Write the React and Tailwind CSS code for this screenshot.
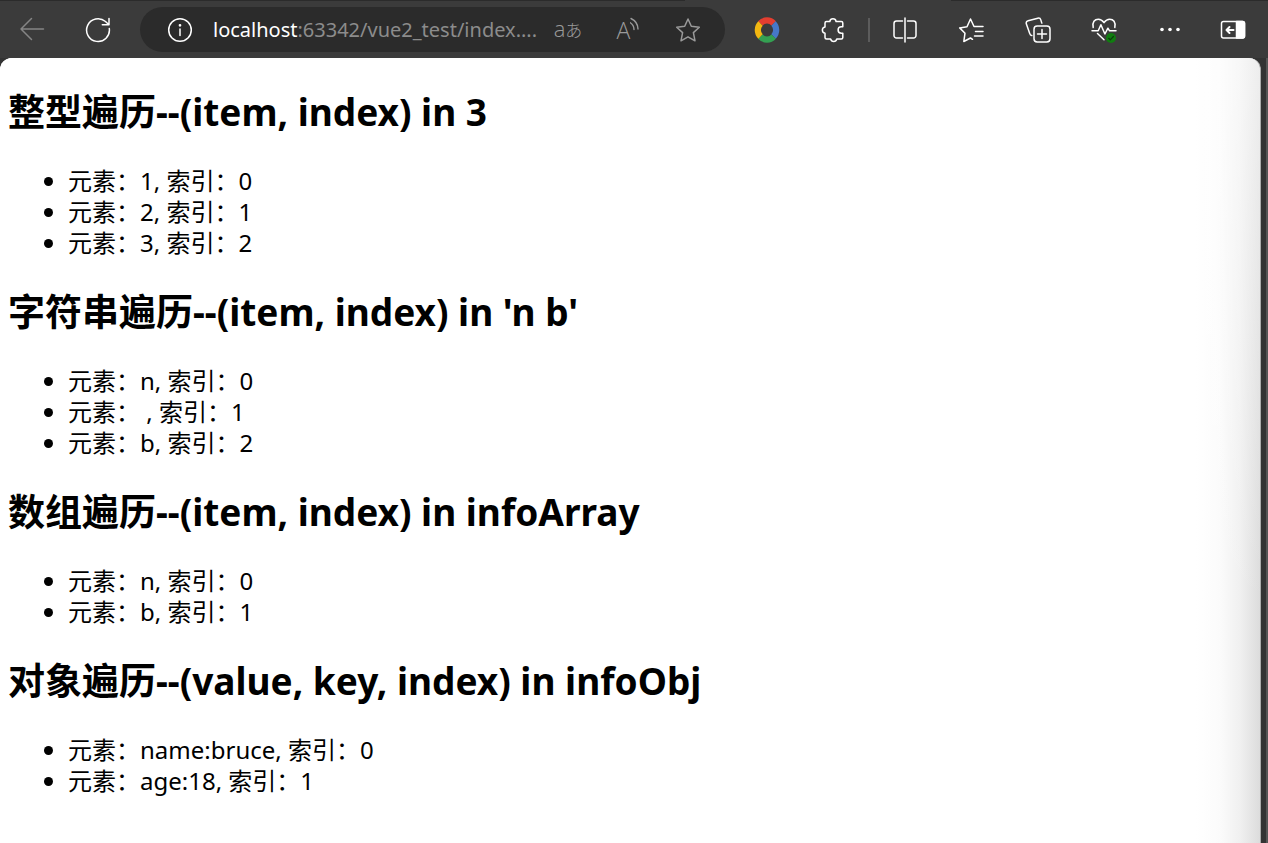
const SECTIONS = [
  {
    title: '整型遍历--(item, index) in 3',
    items: ['1', '2', '3'],
  },
  {
    title: "字符串遍历--(item, index) in 'n b'",
    items: ['n', ' ', 'b'],
  },
  {
    title: '数组遍历--(item, index) in infoArray',
    items: ['n', 'b'],
  },
  {
    title: '对象遍历--(value, key, index) in infoObj',
    items: ['name:bruce', 'age:18'],
  },
];

function Icon({ children, className = 'size-[26px]' }) {
  return (
    <svg
      viewBox="0 0 26 26"
      fill="none"
      stroke="currentColor"
      strokeWidth="1.5"
      strokeLinecap="round"
      strokeLinejoin="round"
      className={className}
      aria-hidden="true"
    >
      {children}
    </svg>
  );
}

function ToolButton({ label, className = 'w-[66px] text-white', children }) {
  return (
    <button
      type="button"
      aria-label={label}
      className={`flex h-full shrink-0 items-center justify-center ${className}`}
    >
      {children}
    </button>
  );
}

function AddressBar() {
  return (
    <div className="flex h-[45px] min-w-0 flex-1 items-center rounded-full bg-[#2b2b2b] pl-[6px] pr-[7px] text-[#9a9a9a]">
      <ToolButton label="Site information" className="w-[67px] text-white">
        <Icon>
          <circle cx="13" cy="13" r="11.3" />
          <path d="M13 12v6.5" />
          <circle cx="13" cy="8.3" r="0.6" fill="currentColor" />
        </Icon>
      </ToolButton>
      <label className="flex min-w-0 flex-1 items-center text-[20px] leading-7">
        <span className="text-white">localhost</span>
        <input
          type="text"
          aria-label="Address"
          defaultValue=":63342/vue2_test/index...."
          className="w-full min-w-0 bg-transparent text-[#8c8c8c] outline-none"
        />
      </label>
      <ToolButton label="Translate" className="w-[60px]">
        <span className="flex items-baseline leading-6">
          <span className="font-['Open_Sans'] text-[22px] font-light">a</span>
          <span className="text-[17px] font-light">あ</span>
        </span>
      </ToolButton>
      <ToolButton label="Read aloud" className="w-[60px]">
        <span className="font-['Open_Sans'] text-[23px] font-light leading-6">A</span>
        <svg
          viewBox="0 0 9 26"
          fill="none"
          stroke="currentColor"
          strokeWidth="1.4"
          strokeLinecap="round"
          className="h-[26px] w-[9px]"
          aria-hidden="true"
        >
          <path d="M0 5.500C2.500 7 4 9 4 12.500M1 1.500C5 3.500 8 7.500 8 12" />
        </svg>
      </ToolButton>
      <ToolButton label="Add to favorites" className="w-[60px]">
        <Icon>
          <path d="M13 2l3.300 7.300 8 .9-5.900 5.400 1.600 8.200-7-4-7 4 1.600-8.200L1.700 10.200l8-.9z" />
        </Icon>
      </ToolButton>
    </div>
  );
}

function Toolbar() {
  return (
    <header className="bg-[#3b3b3b]">
      <div className="flex h-px">
        <div className="w-[54%] bg-[#2b2b2b]" />
        <div className="w-[21%]" />
        <div className="flex-1 bg-[#2b2b2b]" />
      </div>
      <div className="flex h-[57px] items-center">
        <ToolButton label="Back" className="w-[64px] text-[#858585]">
          <Icon>
            <path d="M24.500 12H2M12.500 1.500L2 12l10.500 10.500" />
          </Icon>
        </ToolButton>
        <ToolButton label="Refresh" className="mr-[9px] w-[67px] text-white">
          <Icon>
            <path d="M24.300 11.500A11.400 11.400 0 1 1 20.500 4.500L23.700 7.500M24 1.500v6.300h-6.700" />
          </Icon>
        </ToolButton>
        <AddressBar />
        <ToolButton label="Google extension" className="ml-[9px] w-[66px]">
          <svg viewBox="0 0 26 26" fill="none" strokeWidth="6.200" className="size-[26px]" aria-hidden="true">
            <path d="M6.300 6.300A9.200 9.200 0 0 1 19.700 6.300" stroke="#e33e30" />
            <path d="M19.500 6.500A9.200 9.200 0 0 1 19.500 19.500" stroke="#4678c8" />
            <path d="M19.700 19.700A9.200 9.200 0 0 1 6.300 19.700" stroke="#34a052" />
            <path d="M6.500 19.500A9.200 9.200 0 0 1 6.500 6.500" stroke="#f2b711" />
          </svg>
        </ToolButton>
        <ToolButton label="Extensions">
          <Icon>
            <path d="M6.500 4.500h3.300a3.200 3.200 0 0 1 6.300 0h5.200a1.500 1.500 0 0 1 1.500 1.500v3.800h-1.500a3.200 3.200 0 0 0 0 6.400h1.500v4.300a1.500 1.500 0 0 1-1.500 1.500h-4.500a3.200 3.200 0 0 1-6.200 0H6.500A1.500 1.500 0 0 1 5 20.500v-4.300a3.200 3.200 0 0 1 0-6.300V6a1.500 1.500 0 0 1 1.500-1.500z" />
          </Icon>
        </ToolButton>
        <div className="mx-[2px] h-6 w-[2px] shrink-0 bg-[#5c5c5c]" />
        <ToolButton label="Split screen">
          <Icon>
            <path d="M13 1v24M10.500 4H4.500A2.500 2.500 0 0 0 2 6.500v12A2.500 2.500 0 0 0 4.500 21h6M15.500 4h6A2.500 2.500 0 0 1 24 6.500v12a2.500 2.500 0 0 1-2.500 2.500h-6" />
          </Icon>
        </ToolButton>
        <ToolButton label="Favorites">
          <Icon>
            <path d="M14.500 22.300L12.500 21l-6.700 3.500 1.200-8.300-5.300-5.300 7.300-1.200L12.500 2l3.500 7.500h9M17.500 14.500H25M16.500 19H25" />
          </Icon>
        </ToolButton>
        <ToolButton label="Collections" className="w-[67px] text-white">
          <Icon>
            <rect x="9" y="9" width="16" height="16" rx="3.200" />
            <path d="M17 12.500v9M12.500 17h9M6.800 18.600a2.500 2.500 0 0 1-2-1.900L1.300 6.800a2.500 2.500 0 0 1 1.800-3L12.800 1.200a2.500 2.500 0 0 1 3 1.700l1 3.200" />
          </Icon>
        </ToolButton>
        <ToolButton label="Browser essentials">
          <Icon>
            <path d="M2.200 10.500C.9 5 3.800 2.200 7.300 2.200c2.500 0 4.200 1.300 5.700 3.400 1.500-2.100 3.200-3.400 5.700-3.400 3.500 0 6.400 2.800 5.100 8.300M1 13.800h6.200l2.700-6 4 9.200 3-5.800 1.700 2.600H25M6.500 16.500l6.500 6.300" />
            <circle cx="20" cy="21" r="5" fill="#107c10" stroke="none" />
            <path d="M17.700 21.300l1.600 1.500 3.100-3.300" stroke="#0b3d0b" strokeWidth="1.200" />
          </Icon>
        </ToolButton>
        <ToolButton label="Settings and more">
          <Icon>
            <g fill="currentColor" stroke="none">
              <circle cx="5" cy="12.500" r="1.800" />
              <circle cx="13" cy="12.500" r="1.800" />
              <circle cx="21" cy="12.500" r="1.800" />
            </g>
          </Icon>
        </ToolButton>
        <ToolButton label="Sidebar" className="mr-[5px] w-[60px] text-white">
          <Icon>
            <rect x="1.500" y="4.500" width="23" height="16.500" rx="2" />
            <path d="M16.500 4.500h6a2 2 0 0 1 2 2V19a2 2 0 0 1-2 2h-6z" fill="currentColor" />
            <path d="M13.500 13H6.500M9.500 10l-3 3 3 3" strokeWidth="2" />
          </Icon>
        </ToolButton>
      </div>
    </header>
  );
}

export default function App() {
  return (
    <div className="flex min-h-screen flex-col bg-[#3b3b3b] font-['Noto_Sans','Noto_Sans_CJK_SC',sans-serif]">
      <Toolbar />
      <div className="flex flex-1 border-r-2 border-[#555] bg-[#333]">
        <main className="mr-[5px] flex-1 rounded-t-xl border-r border-[#aaa] bg-white bg-[linear-gradient(to_bottom,rgba(255,255,255,0.5),transparent_70%),linear-gradient(to_left,#dcdcdc,#f0f0f0_20px,#fbfbfb_40px,#fff_64px)] px-2 pt-[30px] text-black">
          {SECTIONS.map(section => (
            <section key={section.title}>
              <h2 className="text-[37px] font-bold leading-[47px]">{section.title}</h2>
              <ul className="my-[30px] list-disc pl-[60px] text-[24px] leading-[31px]">
                {section.items.map((item, index) => (
                  <li key={index} className="whitespace-pre-wrap">
                    元素：{item}, 索引：{index}
                  </li>
                ))}
              </ul>
            </section>
          ))}
        </main>
      </div>
    </div>
  );
}
